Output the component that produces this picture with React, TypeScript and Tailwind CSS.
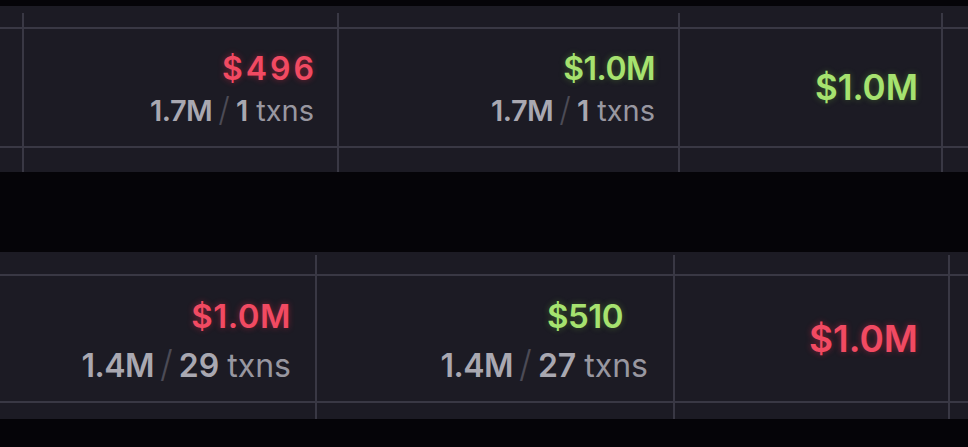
import React from "react";

type Cell = {
  value?: string;
  tone?: "up" | "down";
  vol?: string;
  txns?: string;
  big?: boolean;
  extra?: string;
};

type Col = { w: string; pr: string; cell: Cell; last?: boolean };

const TOP: Col[] = [
  { w: "w-[24px]", pr: "pr-0", cell: {} },
  { w: "w-[315px]", pr: "pr-[23px]", cell: { value: "$496", tone: "down", vol: "1.7M", txns: "1", extra: "tracking-[3px] -mr-[3px]" } },
  { w: "w-[341px]", pr: "pr-[23px]", cell: { value: "$1.0M", tone: "up", vol: "1.7M", txns: "1" } },
  { w: "w-[263px]", pr: "pr-[23px]", cell: { value: "$1.0M", tone: "up", big: true } },
  { w: "flex-1", pr: "pr-0", cell: {}, last: true },
];

const BOTTOM: Col[] = [
  { w: "w-[317px]", pr: "pr-[24px]", cell: { value: "$1.0M", tone: "down", vol: "1.4M", txns: "29", extra: "tracking-[0.5px]" } },
  { w: "w-[358px]", pr: "pr-[25px]", cell: { value: "$510", tone: "up", vol: "1.4M", txns: "27", extra: "mr-[25px]" } },
  { w: "w-[275px]", pr: "pr-[30px]", cell: { value: "$1.0M", tone: "down", big: true } },
  { w: "flex-1", pr: "pr-0", cell: {}, last: true },
];

const toneClass = (tone?: "up" | "down") =>
  tone === "up"
    ? "text-[#a6e26f] [text-shadow:0_0_6px_rgba(120,200,60,0.35)]"
    : "text-[#f14a62] [text-shadow:0_0_6px_rgba(240,40,70,0.45)]";

function Body({ cell, bottom }: { cell: Cell; bottom?: boolean }) {
  if (!cell.value) return null;
  if (cell.big) {
    return (
      <span
        className={`${bottom ? "text-[37px]" : "text-[35px]"} font-semibold ${toneClass(cell.tone)}`}
      >
        {cell.value}
      </span>
    );
  }
  return (
    <div className={`flex flex-col items-end ${bottom ? "mt-[2px]" : "mt-[4px]"}`}>
      <span
        className={`${bottom ? "text-[33px] leading-[44px]" : "text-[32px] leading-[40px]"} font-semibold tracking-[-0.5px] ${toneClass(cell.tone)} ${cell.extra ?? ""}`}
      >
        {cell.value}
      </span>
      <div
        className={`flex items-baseline ${bottom ? "mt-[8px] text-[32px] leading-[40px]" : "mt-[2px] text-[29px] leading-[40px]"}`}
      >
        <span className="font-semibold text-[#a9a8b1] tracking-[-0.5px]">{cell.vol}</span>
        <span className="mx-[6px] font-light text-[#4c4b56] text-[1.15em] leading-none">/</span>
        <span className="font-semibold text-[#a9a8b1]">{cell.txns}</span>
        <span className="ml-[8px] font-normal text-[#9897a0]">txns</span>
      </div>
    </div>
  );
}

function Panel({ cols, head, foot, top, bottom }: { cols: Col[]; head: string; foot: string; top: string; bottom?: boolean }) {
  return (
    <div className={`w-full shrink-0 bg-[#1c1b24] ${top}`}>
      <div className="flex w-full">
        {cols.map((c, i) => (
          <div
            key={i}
            className={`${c.w} shrink-0 flex flex-col ${c.last ? "" : "border-r-2 border-[#393844]"}`}
          >
            <div className={head}></div>
            <div
              className={`border-y-2 border-[#393844] flex items-center justify-end ${bottom ? "h-[129px]" : "h-[121px]"} ${c.pr}`}
            >
              <Body cell={c.cell} bottom={bottom} />
            </div>
            <div className={foot}></div>
          </div>
        ))}
      </div>
    </div>
  );
}

export default function App() {
  return (
    <div
      className="w-[968px] h-[447px] bg-[#050408] flex flex-col pt-[6px] overflow-hidden"
      style={{ fontFamily: "Inter, 'Noto Sans', sans-serif" }}
    >
      <Panel cols={TOP} top="pt-[7px]" head="h-[14px]" foot="h-[24px]" />
      <div className="h-[80px] shrink-0"></div>
      <Panel cols={BOTTOM} top="pt-[3px]" head="h-[19px]" foot="h-[16px]" bottom />
    </div>
  );
}
